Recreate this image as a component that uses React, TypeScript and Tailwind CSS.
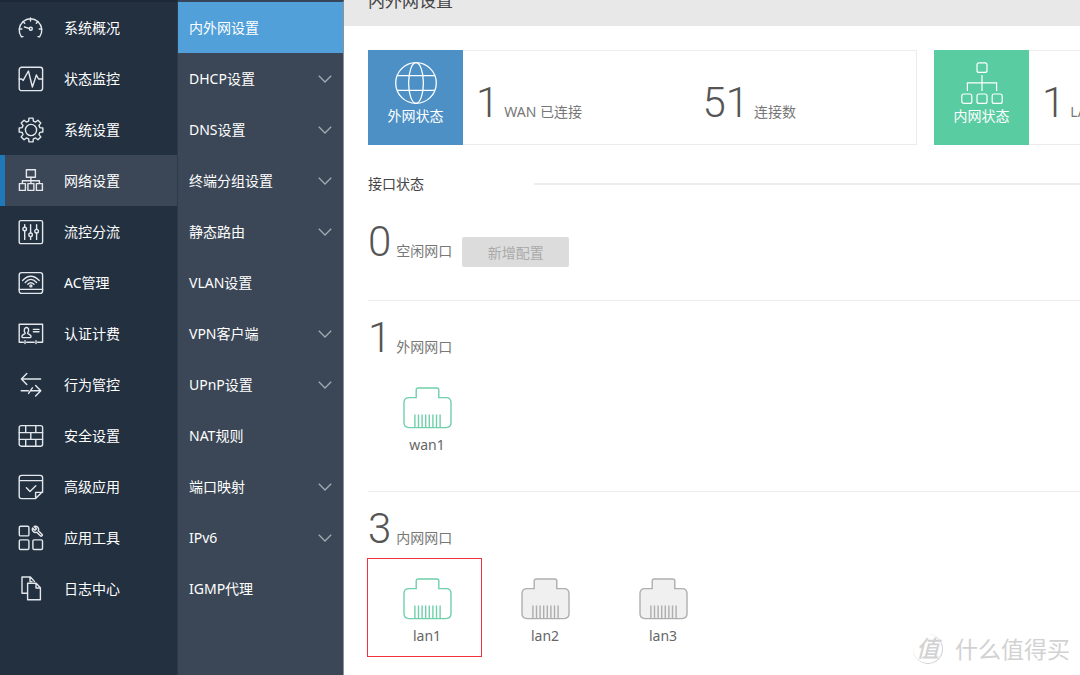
import type { ReactNode } from 'react';
import clsx from 'clsx';

interface NavItem {
  label: string;
  icon: ReactNode;
  active?: boolean;
}

interface SubItem {
  label: string;
  active?: boolean;
  expandable?: boolean;
}

interface Port {
  name: string;
  connected: boolean;
  highlighted?: boolean;
}

// Outline of an eight-toothed gear centred in the 26px icon box
function gearPath() {
  const points: string[] = [];
  for (let i = 0; i < 8; i++) {
    const base = (i * Math.PI) / 4 - Math.PI / 2;
    [
      [-0.26, 9.2],
      [-0.17, 12],
      [0.17, 12],
      [0.26, 9.2],
    ].forEach(([offset, radius]) => {
      const x = 13 + radius * Math.cos(base + offset);
      const y = 13 + radius * Math.sin(base + offset);
      points.push(`${x.toFixed(2)} ${y.toFixed(2)}`);
    });
  }
  return `M${points.join('L')}Z`;
}

function NavIcon({ children }: { children: ReactNode }) {
  return (
    <svg
      className="h-[26px] w-[26px] shrink-0 text-[#e4e8ec]"
      viewBox="0 0 26 26"
      fill="none"
      stroke="currentColor"
      strokeWidth={1.4}
      strokeLinecap="round"
      strokeLinejoin="round"
      aria-hidden="true"
    >
      {children}
    </svg>
  );
}

const navItems: NavItem[] = [
  {
    label: '系统概况',
    icon: (
      <>
        <path d="M5 21.6l-1.6.2A11.3 11.3 0 1 1 21.6 21.8l-1.6-.2" />
        <path d="M12.5 3v3M5 6.6l1.7 1.7M20 6.6l-1.7 1.7M1.4 14h2.4M23.6 14h-2.4M6.4 12l4.6 1.4" />
        <circle cx="12.8" cy="13.8" r="1.5" />
      </>
    ),
  },
  {
    label: '状态监控',
    icon: (
      <>
        <rect x="1.2" y="1.2" width="23.4" height="23.4" rx="2.4" />
        <path d="M1.2 13h2.4l1.6 1.4L10.4 5l4 16 4-12 2.2 4h4" />
      </>
    ),
  },
  {
    label: '系统设置',
    icon: (
      <>
        <path d={gearPath()} />
        <circle cx="13" cy="13" r="5.6" />
      </>
    ),
  },
  {
    label: '网络设置',
    active: true,
    icon: (
      <>
        <rect x="8.4" y="1.8" width="9" height="7.4" />
        <path d="M12.9 9.2v6.2M4.4 15.4v-2.6h17v2.6" />
        <rect x="1.4" y="15.6" width="6" height="6.8" />
        <rect x="9.9" y="15.6" width="6" height="6.8" />
        <rect x="18.4" y="15.6" width="6" height="6.8" />
      </>
    ),
  },
  {
    label: '流控分流',
    icon: (
      <>
        <rect x="1.2" y="1.6" width="23.4" height="23" rx="1.6" />
        <path d="M6.7 5.6v2.6M6.7 12v8.4M12.6 5.6V14M12.6 17.6v2.8M18.6 5.6v4.8M18.6 14v6.4" />
        <circle cx="6.7" cy="10" r="1.8" />
        <circle cx="12.6" cy="15.8" r="1.8" />
        <circle cx="18.6" cy="12.2" r="1.8" />
      </>
    ),
  },
  {
    label: 'AC管理',
    icon: (
      <>
        <rect x="1.2" y="2.6" width="23.4" height="20.8" rx="2.4" />
        <path d="M1.2 19.4h23.4M4.6 10.4q8.2-8.4 16.6 0M7.2 12.4q5.6-6 11.4 0M9.8 14.2q3-3 6.2 0" />
        <circle cx="12.9" cy="15.9" r="1" />
      </>
    ),
  },
  {
    label: '认证计费',
    icon: (
      <>
        <path d="M5.4 21.2H1.2V3.2h23.4v18h-5M8.6 21.2h7.6M7 19.8v2.8M18 19.8v2.8" />
        <path d="M7.2 12.4Q5.6 9.6 6.6 7.6q1.9-2.2 3.8 0 .8 2.2-.8 4.8l3 2q1 2-.4 2.2H5q-1.6-.2-.8-2.2z" />
        <path d="M15.4 8.4H21M15.4 10.8H21" />
      </>
    ),
  },
  {
    label: '行为管控',
    icon: (
      <>
        <path d="M22.6 7h-19M8.8 1.6 3.4 7l5.4 5.6" />
        <path d="M3.2 18.8h7.2M12.8 18.8h9.8M17.6 13.4l5.2 5.4-5.2 5.2M10.6 21.4l3.8-5.6" />
      </>
    ),
  },
  {
    label: '安全设置',
    icon: (
      <>
        <rect x="1.2" y="2.6" width="23.4" height="20.6" rx="2" />
        <path d="M1.2 9.6h23.4M1.2 16.4h23.4M7.7 2.6v7M17.8 2.6v7M12.8 9.6v6.8M7.7 16.4v6.8M17.8 16.4v6.8" />
      </>
    ),
  },
  {
    label: '高级应用',
    icon: (
      <>
        <path d="M17.6 24.6h-14q-2.4 0-2.4-2.4V3.8q0-2.4 2.4-2.4h18.6q2.4 0 2.4 2.4v13.8zM17.6 24.6v-6.2h7M1.2 6.6h23.4" />
        <path d="M8.4 13.8l3.6 3.6 5.8-5.6" />
      </>
    ),
  },
  {
    label: '应用工具',
    icon: (
      <>
        <rect x="1.3" y="1.3" width="9.6" height="9.6" rx="1.2" />
        <rect x="1.3" y="14.9" width="9.6" height="9.6" rx="1.2" />
        <rect x="14.9" y="14.9" width="9.6" height="9.6" rx="1.2" />
        <g transform="translate(25.8 .2) scale(-.52 .52)" strokeWidth={2.8}>
          <path d="M14.7 6.3a1 1 0 0 0 0 1.4l1.6 1.6a1 1 0 0 0 1.4 0l3.77-3.77a6 6 0 0 1-7.94 7.94l-6.91 6.91a2.12 2.12 0 0 1-3-3l6.91-6.91a6 6 0 0 1 7.94-7.94l-3.76 3.76z" />
        </g>
      </>
    ),
  },
  {
    label: '日志中心',
    icon: (
      <>
        <path d="M9.4 17.2H4V1h8.4l4 4.4M12 1v4.6h2" />
        <path d="M9.6 7.2h8.6l4.2 4.6v12H9.6zM18 7.2V12h4.4" />
      </>
    ),
  },
];

const subItems: SubItem[] = [
  { label: '内外网设置', active: true },
  { label: 'DHCP设置', expandable: true },
  { label: 'DNS设置', expandable: true },
  { label: '终端分组设置', expandable: true },
  { label: '静态路由', expandable: true },
  { label: 'VLAN设置' },
  { label: 'VPN客户端', expandable: true },
  { label: 'UPnP设置', expandable: true },
  { label: 'NAT规则' },
  { label: '端口映射', expandable: true },
  { label: 'IPv6', expandable: true },
  { label: 'IGMP代理' },
];

const wanPorts: Port[] = [{ name: 'wan1', connected: true }];

const lanPorts: Port[] = [
  { name: 'lan1', connected: true, highlighted: true },
  { name: 'lan2', connected: false },
  { name: 'lan3', connected: false },
];

function GlobeIcon() {
  return (
    <svg className="h-[42px] w-[42px]" viewBox="0 0 42 42" fill="none" stroke="currentColor" strokeWidth={1.3} aria-hidden="true">
      <circle cx="21" cy="21" r="20.3" />
      <ellipse cx="21" cy="21" rx="7.4" ry="20.3" />
      <path d="M2.2 13.6h37.6M2.2 28.4h37.6" />
    </svg>
  );
}

function LanIcon() {
  return (
    <svg className="h-[42px] w-[42px]" viewBox="0 0 42 42" fill="none" stroke="currentColor" strokeWidth={1.2} aria-hidden="true">
      <rect x="16" y=".8" width="10" height="9.6" rx="2" />
      <path d="M21 13v16M6.4 29v-8.2h29.2V29" />
      <rect x=".8" y="32" width="10" height="9.4" rx="2" />
      <rect x="16" y="32" width="10" height="9.4" rx="2" />
      <rect x="31.2" y="32" width="10" height="9.4" rx="2" />
    </svg>
  );
}

function PortIcon({ connected }: { connected: boolean }) {
  return (
    <svg
      className={clsx('h-[42px] w-[49px]', connected ? 'fill-white stroke-[#6fd0ab]' : 'fill-[#f0f0f0] stroke-[#aeaeae]')}
      viewBox="0 0 49 42"
      strokeWidth={1.4}
      aria-hidden="true"
    >
      <path d="M13.2 10.6V3q0-2 2-2h18.600q2 0 2 2v7.600H43q5 0 5 5v20q0 5-5 5H6q-5 0-5-5v-20q0-5 5-5z" />
      <path d="M11.9 27.6v13M15.5 27.6v13M19.1 27.6v13M22.7 27.6v13M26.3 27.6v13M29.9 27.6v13M33.5 27.6v13M37.1 27.6v13" />
    </svg>
  );
}

function Stat({ value, label }: { value: number; label: string }) {
  return (
    <div className="flex items-baseline gap-[5px] whitespace-nowrap">
      <span className="font-['Roboto',sans-serif] text-[42px] leading-[52px] font-light text-[#555]">{value}</span>
      <span className="text-[14px] text-[#777]">{label}</span>
    </div>
  );
}

interface StatusCardProps {
  title: string;
  icon: ReactNode;
  tone: 'blue' | 'green';
  stats: { value: number; label: string }[];
}

function StatusCard({ title, icon, tone, stats }: StatusCardProps) {
  return (
    <section className="flex shrink-0 basis-[549px] border border-[#ececec]">
      <div
        className={clsx(
          '-my-px -ml-px flex h-[95px] w-[95px] flex-col items-center pt-3 text-white',
          tone === 'blue' ? 'bg-[#4c90c5]' : 'bg-[#5acca2]'
        )}
      >
        {icon}
        <h2 className="text-[14px] leading-6">{title}</h2>
      </div>
      {stats.map((stat) => (
        <div key={stat.label} className="flex-1 pt-[26px] pl-[13px]">
          <Stat value={stat.value} label={stat.label} />
        </div>
      ))}
    </section>
  );
}

function PortList({ ports }: { ports: Port[] }) {
  return (
    <ul className="mt-[3px] flex">
      {ports.map((port) => (
        <li key={port.name} className="relative flex w-[118px] flex-col items-center pt-5">
          <PortIcon connected={port.connected} />
          <span className="mt-1 text-[14px] leading-6 text-[#666]">{port.name}</span>
          {port.highlighted && <span className="absolute top-0 -left-px h-[99px] w-[115px] border border-[#f0323c]" />}
        </li>
      ))}
    </ul>
  );
}

export default function App() {
  return (
    <div className="relative flex h-screen overflow-hidden bg-white font-['Noto_Sans','Noto_Sans_CJK_SC',sans-serif] text-[14px]">
      <nav className="w-[178px] shrink-0 border-t-2 border-r border-t-[#1d2837] border-r-[#2c3a4a] bg-[#223040]" aria-label="主菜单">
        {navItems.map((item) => (
          <a
            key={item.label}
            href="#"
            className={clsx(
              'flex h-[51px] items-center gap-5 border-l-5 pl-[13px] text-white',
              item.active ? 'border-[#1f78b8] bg-[#3b4756]' : 'border-transparent'
            )}
          >
            <NavIcon>{item.icon}</NavIcon>
            <span>{item.label}</span>
          </a>
        ))}
      </nav>

      <nav className="w-[166px] shrink-0 border-t-2 border-r border-t-[#36465a] border-r-[#8b929b] bg-[#3b4756]" aria-label="网络设置">
        {subItems.map((item) => (
          <a
            key={item.label}
            href="#"
            className={clsx('flex h-[51px] items-center justify-between px-[11px] text-white', item.active && 'bg-[#51a0da]')}
          >
            <span>{item.label}</span>
            {item.expandable && (
              <svg className="h-2 w-[14px]" viewBox="0 0 14 8" fill="none" stroke="#a3abb3" strokeWidth={1.3} aria-hidden="true">
                <path d="M.8.8 7 7 13.200.8" />
              </svg>
            )}
          </a>
        ))}
      </nav>

      <main className="min-w-0 flex-1 overflow-hidden">
        <header className="h-[26px] overflow-hidden bg-[#e8e8e8] pl-6">
          <h1 className="-mt-[11px] text-[17px] leading-6 text-[#444]">内外网设置</h1>
        </header>

        <div className="pt-6 pl-6">
          <div className="flex gap-[17px]">
            <StatusCard
              title="外网状态"
              icon={<GlobeIcon />}
              tone="blue"
              stats={[
                { value: 1, label: 'WAN 已连接' },
                { value: 51, label: '连接数' },
              ]}
            />
            <StatusCard
              title="内网状态"
              icon={<LanIcon />}
              tone="green"
              stats={[
                { value: 1, label: 'LAN 已连接' },
                { value: 0, label: '终端数' },
              ]}
            />
          </div>

          <div className="mt-[27px] flex items-center">
            <h2 className="w-[166px] text-[14px] leading-6 text-[#444]">接口状态</h2>
            <div className="h-[2px] flex-1 bg-[#ededed]" />
          </div>

          <section className="flex h-[105px] items-start gap-[10px] border-b border-[#ededed] pt-5">
            <Stat value={0} label="空闲网口" />
            <button type="button" disabled className="mt-[21px] h-[30px] w-[107px] rounded-[2px] bg-[#dcdcdc] text-[14px] text-[#aaa]">
              新增配置
            </button>
          </section>

          <section className="h-[191px] border-b border-[#ededed] pt-[11px]">
            <Stat value={1} label="外网网口" />
            <PortList ports={wanPorts} />
          </section>

          <section className="pt-[11px]">
            <Stat value={3} label="内网网口" />
            <PortList ports={lanPorts} />
          </section>
        </div>
      </main>

      <div className="pointer-events-none absolute right-[10px] bottom-[8px] flex items-center gap-3 text-[#d2d2d2]">
        <span className="flex h-[30px] w-[30px] items-center justify-center rounded-full border-r border-b border-[#d2d2d2] text-[23px] leading-none font-medium italic">
          值
        </span>
        <span className="text-[23px] leading-9">什么值得买</span>
      </div>
    </div>
  );
}
